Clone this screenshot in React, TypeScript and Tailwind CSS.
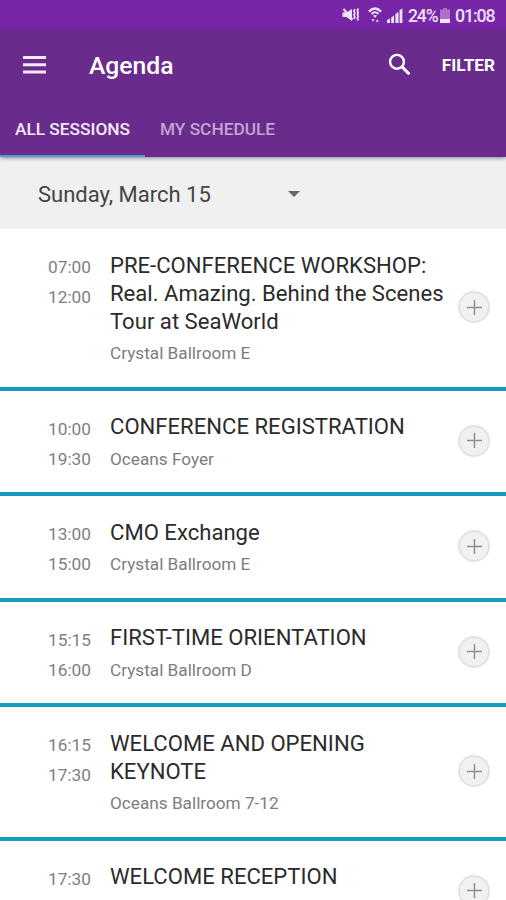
import React, {useState} from "react";

interface Session {
    start: string;
    end?: string;
    title: string[];
    location?: string;
}

const sessions: Session[] = [
    {
        start: "07:00",
        end: "12:00",
        title: ["PRE-CONFERENCE WORKSHOP:", "Real. Amazing. Behind the Scenes", "Tour at SeaWorld"],
        location: "Crystal Ballroom E",
    },
    {start: "10:00", end: "19:30", title: ["CONFERENCE REGISTRATION"], location: "Oceans Foyer"},
    {start: "13:00", end: "15:00", title: ["CMO Exchange"], location: "Crystal Ballroom E"},
    {start: "15:15", end: "16:00", title: ["FIRST-TIME ORIENTATION"], location: "Crystal Ballroom D"},
    {start: "16:15", end: "17:30", title: ["WELCOME AND OPENING", "KEYNOTE"], location: "Oceans Ballroom 7-12"},
    {start: "17:30", title: ["WELCOME RECEPTION"]},
];

const tabs = ["ALL SESSIONS", "MY SCHEDULE"];

const StatusBar = () => (
    <div className="flex h-[30px] shrink-0 items-center justify-end bg-[#7826a8] pt-px pr-[11px] text-[#eee0f6]">
        {/* muted speaker with vibration waves */}
        <svg className="mr-[8px] mb-0.5 h-4 w-[18px]" viewBox="0 0 18 16" fill="none" stroke="currentColor">
            <path d="M.5 5.5h4L10 2v12l-5.5-4h-4z" fill="currentColor" stroke="none" />
            <path d="M1.5 2l9 10.5" strokeWidth="2" />
            <path d="M12.8 2l-.8 2 .8 2-.8 2 .8 2-.8 2M16.2 1.5l-.8 2 .8 2-.8 2 .8 2-.8 2 .8 2" strokeWidth="1.8" />
        </svg>
        {/* wifi with transfer arrows */}
        <svg className="mr-[5px] mb-0.5 h-4 w-[14px]" viewBox="0 0 14 16" fill="none" stroke="currentColor">
            <path d="M1 4.6Q7-1.4 13 4.6" strokeWidth="2.4" />
            <path d="M3.6 7q3.4-3.4 6.8 0" strokeWidth="1.9" />
            <path d="M5 8.6q2-1.4 4 0L7 11z" fill="currentColor" stroke="none" />
            <path d="M3.5 12.2h3L5 14.8zM7.8 14.8h3l-1.5-2.6z" fill="currentColor" stroke="none" />
        </svg>
        <svg className="mr-[5px] h-4 w-[16px]" viewBox="0 0 16 16" fill="currentColor">
            <path d="M0 15v-3l3-1.5V15zM4.2 15V9.5l2.8-2V15zM8.4 15V6l3.1-2v11zM12.6 15V2l2.8-1.5V15z" />
        </svg>
        <span className="w-[32px] text-[17.5px] leading-5 font-medium tracking-[-1.1px] whitespace-nowrap">24%</span>
        <svg className="mr-[5px] mb-px h-[15px] w-[10px]" viewBox="0 0 10 15">
            <path d="M3 0h4v1.5h3V11H0V1.5h3z" fill="#a873c8" />
            <path d="M0 11h10v4H0z" fill="#f0e5f6" />
        </svg>
        <span className="w-10 text-[17.8px] leading-5 font-medium tracking-[-1.1px] whitespace-nowrap">01:08</span>
    </div>
);

const SessionRow = ({session}: {session: Session}) => (
    <li className="flex min-h-[105.5px] border-b-4 border-[#169bbd] pt-[21.5px] pb-[22.5px]">
        <div className="w-[110px] shrink-0 pt-[1.5px] pr-[19px] text-right text-[17.3px] leading-[30px] text-[#808080]">
            <div>{session.start}</div>
            {session.end && <div className="-mb-2">{session.end}</div>}
        </div>
        <div className="flex-1 whitespace-nowrap">
            <h2 className="text-[22.1px] leading-7 text-[#2b2b2b]">
                {session.title.map((line) => (
                    <span key={line} className="block">
                        {line}
                    </span>
                ))}
            </h2>
            {session.location && (
                <p className="mt-[7.5px] text-[17.2px] leading-[22px] text-[#7d7d7d]">{session.location}</p>
            )}
        </div>
        <button className="mr-4 flex h-8 w-8 shrink-0 items-center justify-center self-center rounded-full border-2 border-[#e2e2e2] bg-[#f1f1f1]">
            <svg className="h-[15px] w-[15px]" viewBox="0 0 15 15" stroke="#909090" strokeWidth="1.5">
                <path d="M7.5 0v15M0 7.5h15" />
            </svg>
        </button>
    </li>
);

function App() {
    const [active, setActive] = useState(tabs[0]);

    return (
        <div className="flex h-[900px] w-[506px] flex-col overflow-hidden bg-white font-['Roboto',sans-serif]">
            <StatusBar />
            <header className="z-10 flex h-[127px] shrink-0 flex-col bg-[#6a2c8c] shadow-[0_1px_4px_rgba(0,0,0,0.45)]">
                <div className="flex h-[70px] items-center pr-[11px] pl-[23px] text-white">
                    <svg className="h-[18px] w-[23px]" viewBox="0 0 23 18" fill="#f4eaf8">
                        <path d="M0 0h23v3H0zM0 7.2h23v3H0zM0 14.5h23v3H0z" />
                    </svg>
                    <h1 className="ml-[43px] flex-1 pt-0.5 text-[24.7px] font-medium">Agenda</h1>
                    <svg className="mr-[31px] mb-0.5 h-[23px] w-[23px]" viewBox="0 0 23 23" fill="none" stroke="currentColor">
                        <circle cx="9" cy="8.8" r="6.9" strokeWidth="2.4" />
                        <path d="M13.8 13.6l7.6 7.6" strokeWidth="3" />
                    </svg>
                    <button className="pt-0.5 text-[17.2px] font-bold">FILTER</button>
                </div>
                <nav className="flex flex-1">
                    {tabs.map((tab) => (
                        <button
                            key={tab}
                            onClick={() => setActive(tab)}
                            className={`w-[145px] border-b-2 pt-1 text-[17.3px] font-medium whitespace-nowrap ${
                                active === tab ? "border-[#4a9fd0] text-[#f4eaf8]" : "border-transparent text-[#c3a3d3]"
                            }`}
                        >
                            {tab}
                        </button>
                    ))}
                </nav>
            </header>
            <div className="flex h-[72px] shrink-0 items-center bg-[#f0f0f0] pt-0.5 pl-[38px] text-[22px] text-[#444]">
                <span className="w-[250px] pt-px">Sunday, March 15</span>
                <svg className="h-[6px] w-[12px]" viewBox="0 0 12 6" fill="#666">
                    <path d="M0 0h12L6 6z" />
                </svg>
            </div>
            <ul>
                {sessions.map((session) => (
                    <SessionRow key={session.title[0]} session={session} />
                ))}
            </ul>
        </div>
    );
}

export default App;
